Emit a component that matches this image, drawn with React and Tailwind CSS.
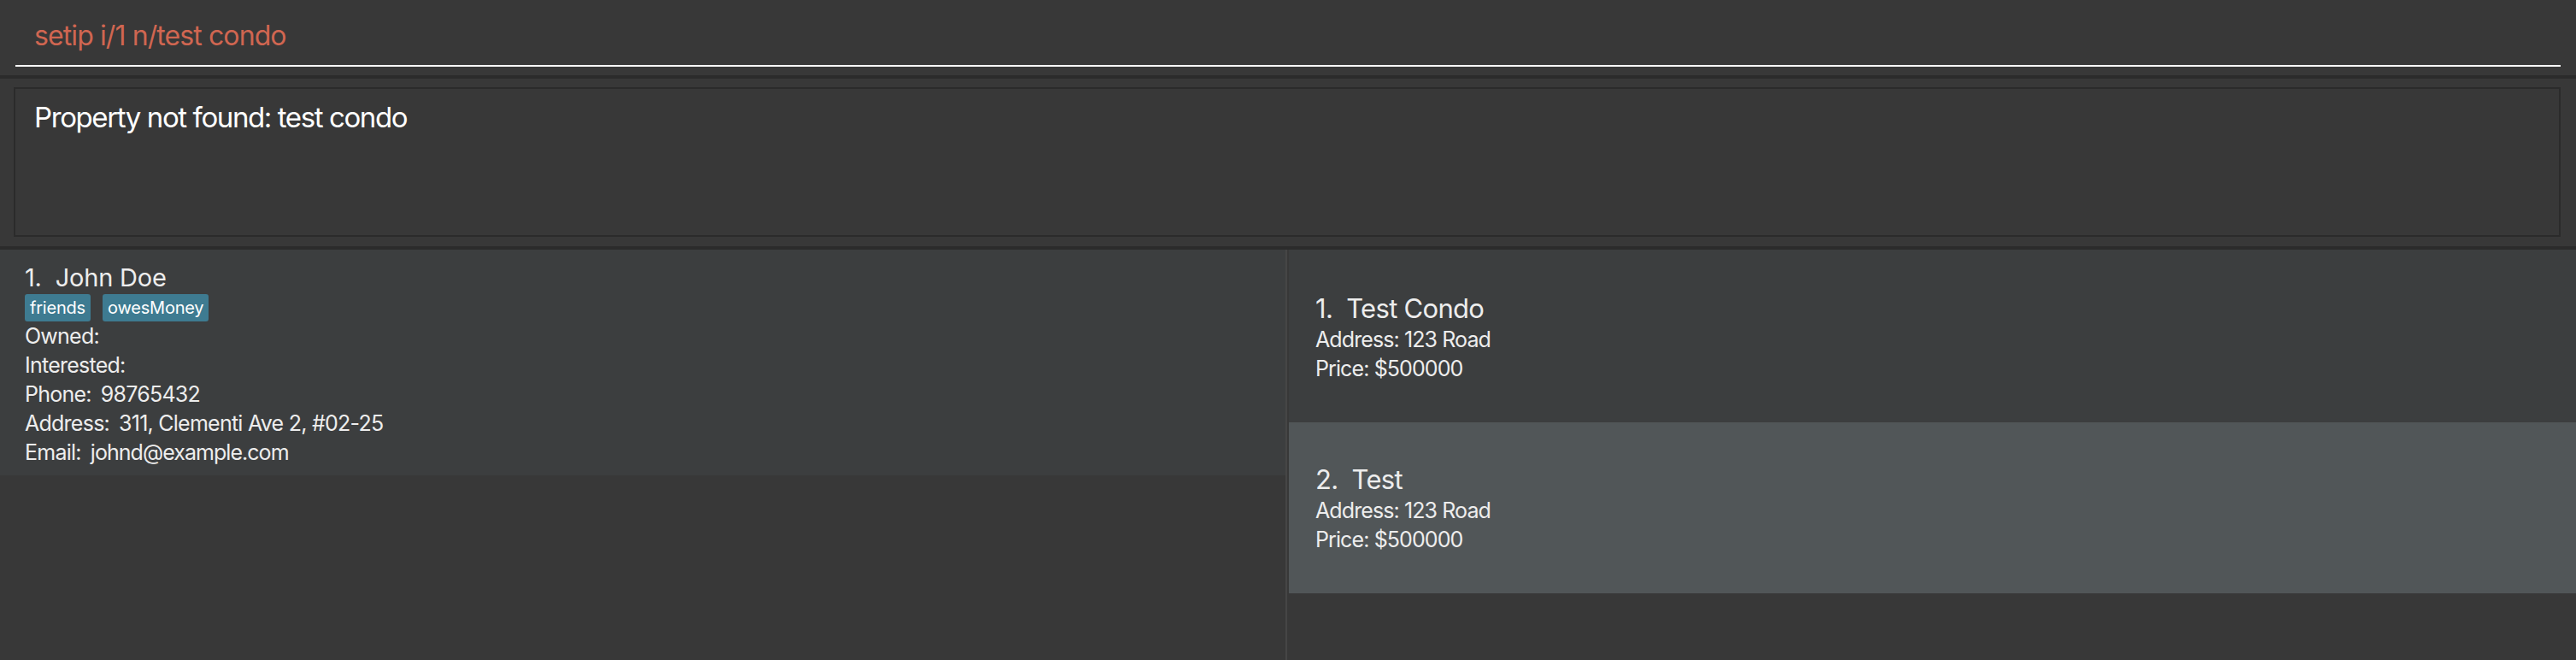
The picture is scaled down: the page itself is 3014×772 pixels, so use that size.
import React from "react";

const persons = [
  {
    id: 1,
    name: "John Doe",
    tags: ["friends", "owesMoney"],
    phone: "98765432",
    address: "311, Clementi Ave 2, #02-25",
    email: "johnd@example.com",
  },
];

const properties = [
  { id: 1, name: "Test Condo", address: "123 Road", price: "$500000" },
  { id: 2, name: "Test", address: "123 Road", price: "$500000" },
];

function PersonCard({ data }) {
  return (
    <div className="h-[264px] bg-[#3c3e3f] pl-[29px] pt-[15px] text-[#ededed]">
      <div className="text-[29px] leading-[36px] whitespace-pre tracking-[-0.2px]">
        {data.id}.  {data.name}
      </div>
      <div className="flex gap-[14px] mt-[1px]">
        {data.tags.map((t) => (
          <span
            key={t}
            className="h-[32px] px-[6px] flex items-center rounded-[3px] bg-[#3e7b91] text-[20px] tracking-[-0.2px] text-white"
          >
            {t}
          </span>
        ))}
      </div>
      <div className="text-[25px] leading-[34px] tracking-[-0.75px]">
        <div>Owned:</div>
        <div>Interested:</div>
        <div>
          Phone:<span className="ml-[11px]">{data.phone}</span>
        </div>
        <div>
          Address:<span className="ml-[11px]">{data.address}</span>
        </div>
        <div>
          Email:<span className="ml-[11px] tracking-[-0.95px]">{data.email}</span>
        </div>
      </div>
    </div>
  );
}

function PropertyCard({ data, odd }) {
  return (
    <div
      className={`pl-[31px] text-[#ededed] ${
        odd ? "h-[200px] pt-[47px] bg-[#515658]" : "h-[202px] pt-[49px] bg-[#3c3e3f]"
      }`}
    >
      <div className="text-[31px] leading-[39px] whitespace-pre tracking-[-0.7px]">
        {data.id}.  {data.name}
      </div>
      <div className="text-[25px] leading-[34px] tracking-[-0.9px]">
        <div>Address: {data.address}</div>
        <div>Price: {data.price}</div>
      </div>
    </div>
  );
}

export default function App() {
  return (
    <div
      className="w-[3014px] h-[772px] bg-[#383838] flex flex-col overflow-hidden"
      style={{ fontFamily: "Inter, 'Noto Sans', sans-serif" }}
    >
      {/* Command box */}
      <div className="h-[88px] px-[18px] shrink-0">
        <div className="h-[78px] border-b-2 border-white pl-[22px] pt-[22px]">
          <div className="text-[32px] leading-[40px] text-[#d06651] tracking-[-0.9px]">
            setip i/1 n/test condo
          </div>
        </div>
      </div>
      <div className="h-[4px] bg-[#2b2b2b] shrink-0" />

      {/* Result display */}
      <div className="h-[196px] pl-[16px] pr-[18px] pt-[10px] pb-[11px] shrink-0">
        <div className="h-full border-2 border-[#2b2b2b] pl-[22px] pt-[13px]">
          <div className="text-[33px] leading-[40px] text-white tracking-[-1.4px]">
            Property not found: test condo
          </div>
        </div>
      </div>
      <div className="h-[4px] bg-[#2b2b2b] shrink-0" />

      {/* Lists */}
      <div className="flex-1 flex min-h-0">
        <div className="w-[1504px] shrink-0">
          {persons.map((p) => (
            <PersonCard key={p.id} data={p} />
          ))}
        </div>
        <div className="w-[4px] shrink-0 flex">
          <div className="w-[2px] bg-[#464646]" />
        </div>
        <div className="flex-1">
          {properties.map((p, i) => (
            <PropertyCard key={p.id} data={p} odd={i % 2 === 1} />
          ))}
        </div>
      </div>
    </div>
  );
}
